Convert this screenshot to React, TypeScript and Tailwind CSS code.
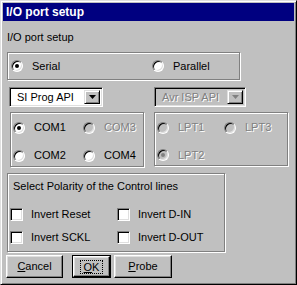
import React from "react";

const etched = "border border-[#808080] shadow-[inset_1px_1px_#fff,1px_1px_#fff]";
const dimText = "text-[#808080] [text-shadow:1px_1px_0_#fff]";

const Radio: React.FC<{ checked?: boolean; disabled?: boolean; label: string; className?: string }> = ({
  checked,
  disabled,
  label,
  className = "",
}) => (
  <div className={`flex items-center h-[13px] ${className}`}>
    <span
      className={`w-[12px] h-[12px] rounded-full border border-t-[#808080] border-l-[#808080] border-r-white border-b-white shadow-[inset_1px_1px_#000,inset_-1px_-1px_#dfdfdf] flex items-center justify-center shrink-0 ${
        disabled ? "bg-[#c0c0c0]" : "bg-white"
      }`}
    >
      {checked && (
        <span className={`w-[4px] h-[4px] rounded-full ${disabled ? "bg-[#808080]" : "bg-black"}`} />
      )}
    </span>
    <span className={`ml-[9px] leading-[13px] ${disabled ? dimText : ""}`}>{label}</span>
  </div>
);

const Checkbox: React.FC<{ label: string; className?: string }> = ({ label, className = "" }) => (
  <div className={`flex items-center h-[13px] ${className}`}>
    <span className="w-[13px] h-[13px] bg-white border border-t-[#808080] border-l-[#808080] border-r-white border-b-white shadow-[inset_1px_1px_#000,inset_-1px_-1px_#dfdfdf] shrink-0" />
    <span className="ml-[8px] leading-[13px]">{label}</span>
  </div>
);

const Select: React.FC<{ value: string; disabled?: boolean; className?: string }> = ({
  value,
  disabled,
  className = "",
}) => (
  <div
    className={`h-[20px] flex items-center border border-t-[#808080] border-l-[#808080] border-r-white border-b-white shadow-[inset_1px_1px_#000,inset_-1px_-1px_#dfdfdf] p-[2px] ${
      disabled ? "bg-[#c0c0c0]" : "bg-white"
    } ${className}`}
  >
    <span className={`flex-1 pl-[5px] leading-[14px] ${disabled ? dimText : ""}`}>{value}</span>
    <span className="w-[16px] h-[14px] bg-[#c0c0c0] border border-t-[#dfdfdf] border-l-[#dfdfdf] border-r-black border-b-black shadow-[inset_1px_1px_#fff,inset_-1px_-1px_#808080] flex items-center justify-center">
      <svg width="7" height="4" viewBox="0 0 7 4">
        <path d="M0 0h7L3.5 4z" fill={disabled ? "#808080" : "#000"} />
      </svg>
    </span>
  </div>
);

const raised =
  "border border-t-white border-l-white border-r-black border-b-black shadow-[inset_-1px_-1px_#808080,inset_1px_1px_#dfdfdf]";

export default function App() {
  return (
    <div className="w-[297px] h-[285px] bg-[#c0c0c0] border border-t-[#dfdfdf] border-l-[#dfdfdf] border-r-black border-b-black shadow-[inset_1px_1px_#fff,inset_-1px_-1px_#808080] p-[2px] font-['Liberation_Sans',Arial,sans-serif] text-[11px] text-black flex flex-col">
      {/* Title bar */}
      <div className="h-[18px] bg-[#000080] text-white font-bold text-[12px] pl-[3px] flex items-center">
        I/O port setup
      </div>

      <div className="ml-[4px] mt-[10px] leading-[13px]">I/O port setup</div>

      {/* Serial / Parallel */}
      <div className={`ml-[4px] mt-[8px] w-[233px] h-[28px] ${etched} flex items-center pl-[3px]`}>
        <Radio checked label="Serial" className="w-[141px]" />
        <Radio label="Parallel" />
      </div>

      {/* API selects */}
      <div className="mt-[7px] flex">
        <Select value="SI Prog API" className="ml-[6px] w-[94px]" />
        <Select value="Avr ISP API" disabled className="ml-[51px] w-[92px]" />
      </div>

      {/* Port groups */}
      <div className="mt-[5px] flex items-start">
        <div className={`ml-[7px] w-[134px] h-[55px] ${etched} grid grid-cols-[70px_1fr] gap-y-[11px] pt-[8px] pl-[2px]`}>
          <Radio checked label="COM1" />
          <Radio disabled label="COM3" />
          <Radio label="COM2" />
          <Radio label="COM4" />
        </div>
        <div className={`ml-[10px] w-[134px] h-[54px] ${etched} grid grid-cols-[67px_1fr] gap-y-[11px] pt-[8px] pl-[2px]`}>
          <Radio disabled label="LPT1" />
          <Radio disabled label="LPT3" />
          <Radio disabled checked label="LPT2" />
        </div>
      </div>

      {/* Polarity */}
      <div className={`ml-[4px] mt-[6px] w-[218px] h-[79px] ${etched} pt-[6px] pl-[2px]`}>
        <div className="pl-[3px] leading-[13px]">Select Polarity of the Control lines</div>
        <div className="mt-[15px] grid grid-cols-[107px_1fr] gap-y-[10px]">
          <Checkbox label="Invert Reset" />
          <Checkbox label="Invert D-IN" />
          <Checkbox label="Invert SCKL" />
          <Checkbox label="Invert D-OUT" />
        </div>
      </div>

      {/* Buttons */}
      <div className="mt-[3px] flex">
        <button className={`ml-[3px] w-[57px] h-[23px] ${raised} flex items-center justify-center`}>
          <span>
            <span className="underline">C</span>ancel
          </span>
        </button>
        <button className="ml-[9px] w-[39px] h-[23px] border border-black flex">
          <span className={`flex-1 ${raised} flex items-center justify-center`}>
            <span className="border border-dotted border-black px-[3px] leading-[12px]">
              <span className="underline">O</span>K
            </span>
          </span>
        </button>
        <button className={`ml-[3px] w-[58px] h-[23px] ${raised} flex items-center justify-center`}>
          <span>
            <span className="underline">P</span>robe
          </span>
        </button>
      </div>
    </div>
  );
}
